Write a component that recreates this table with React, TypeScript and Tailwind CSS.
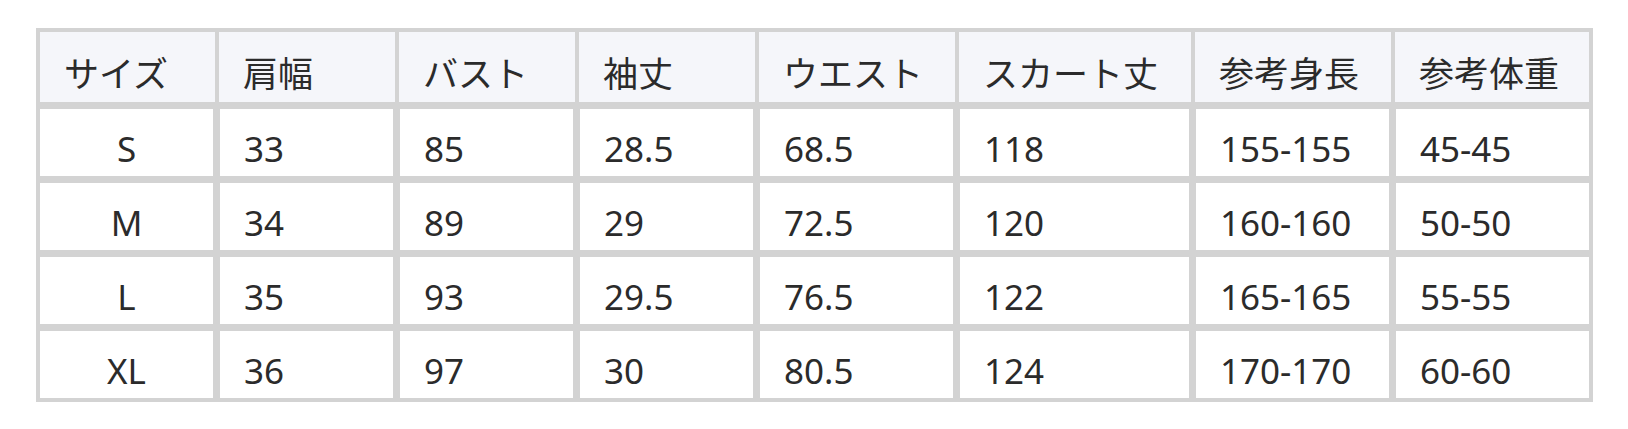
const headers = ['サイズ', '肩幅', 'バスト', '袖丈', 'ウエスト', 'スカート丈', '参考身長', '参考体重'];

const rows = [
  ['S', '33', '85', '28.5', '68.5', '118', '155-155', '45-45'],
  ['M', '34', '89', '29', '72.5', '120', '160-160', '50-50'],
  ['L', '35', '93', '29.5', '76.5', '122', '165-165', '55-55'],
  ['XL', '36', '97', '30', '80.5', '124', '170-170', '60-60'],
];

// header cells sit on a 4px grid line, body cells on a 7px one
const headWidths = ['w-[175px]', 'w-[176px]', 'w-[176px]', 'w-[176px]', 'w-[196px]', 'w-[232px]', 'w-[196px]', 'w-[194px]'];
const bodyWidths = ['w-[173px]', 'w-[173px]', 'w-[173px]', 'w-[173px]', 'w-[193px]', 'w-[229px]', 'w-[193px]', 'w-[193px]'];

export default function App() {
  return (
    <div
      className="min-h-screen bg-white pt-[28px] pl-[36px] text-[#2b2b2b]"
      style={{ fontFamily: '"Noto Sans", "Noto Sans CJK JP", sans-serif' }}
    >
      <div className="w-[1557px] border-[4px] border-[#d3d3d3] bg-[#d3d3d3] flex flex-col gap-[7px] text-[35px]">
        {/* Header */}
        <div className="flex gap-[4px]">
          {headers.map((h, i) => (
            <div
              key={h}
              className={`${headWidths[i]} h-[70px] bg-[#f5f6fa] flex items-center pl-[24px] pt-[12px] leading-none whitespace-nowrap`}
            >
              {h}
            </div>
          ))}
        </div>

        {/* Body */}
        {rows.map((row) => (
          <div key={row[0]} className="flex gap-[7px]">
            {row.map((cell, i) => (
              <div
                key={i}
                className={`${bodyWidths[i]} h-[67px] bg-white flex items-center pt-[12px] leading-none whitespace-nowrap ${
                  i === 0 ? 'justify-center' : 'pl-[24px]'
                }`}
              >
                {cell}
              </div>
            ))}
          </div>
        ))}
      </div>
    </div>
  );
}
